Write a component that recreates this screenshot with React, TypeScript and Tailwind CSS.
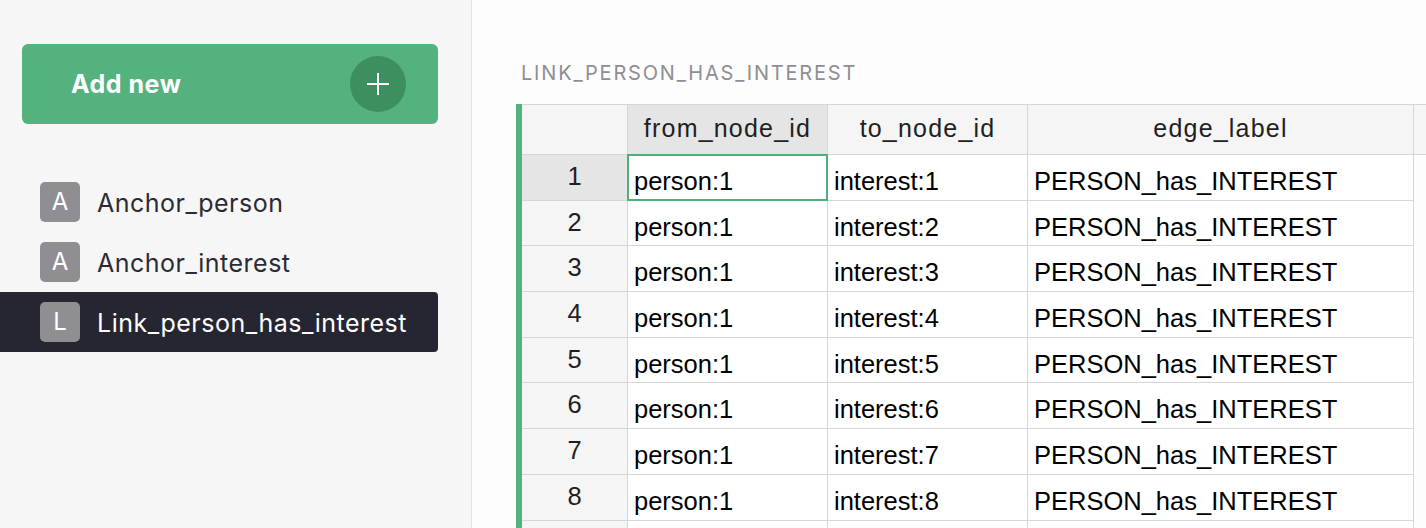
import React from "react";

const items = [
  { letter: "A", name: "Anchor_person", active: false },
  { letter: "A", name: "Anchor_interest", active: false },
  { letter: "L", name: "Link_person_has_interest", active: true },
];

const rows = [1, 2, 3, 4, 5, 6, 7, 8, 9];

function PlusIcon() {
  return (
    <svg width="24" height="24" viewBox="0 0 24 24" fill="none">
      <path d="M12 1v22M1 12h22" stroke="white" strokeWidth="2" />
    </svg>
  );
}

export default function App() {
  return (
    <div className="flex w-[1426px] h-[528px] overflow-hidden">
      <aside className="w-[472px] shrink-0 bg-[#f6f6f6] border-r border-[#e4e4e4] pt-[44px] font-['Inter',sans-serif]">
        <div className="pl-[22px]">
          <button className="w-[416px] h-[80px] rounded-[6px] bg-[#53b27d] flex items-center justify-between pl-[49px] pr-[32px]">
            <span className="text-white text-[25px] font-bold tracking-[0.5px] pt-[2px]">Add new</span>
            <span className="w-[56px] h-[56px] rounded-full bg-[#3e8f5f] flex items-center justify-center">
              <PlusIcon />
            </span>
          </button>
        </div>
        <ul className="mt-[48px]">
          {items.map((it) => (
            <li
              key={it.name}
              className={`w-[438px] h-[60px] flex items-center pl-[40px] gap-[17px] rounded-r-[4px] ${
                it.active ? "bg-[#262632] text-white" : "text-[#2b2b35]"
              }`}
            >
              <span className="w-[40px] h-[40px] rounded-[5px] bg-[#8e8e93] text-white text-[24px] flex items-center justify-center">
                {it.letter}
              </span>
              <span className="text-[25px] tracking-[0.5px] pt-[3px]">{it.name}</span>
            </li>
          ))}
        </ul>
      </aside>
      <main className="flex-1 bg-[#fdfdfd] pl-[44px] pt-[59px] min-w-0">
        <div className="pl-[5px] h-[45px] text-[20px] tracking-[1.8px] text-[#8e8e93] font-['Inter',sans-serif] leading-[28px]">
          LINK_PERSON_HAS_INTEREST
        </div>
        <div className="border-l-[6px] border-[#53b27d] font-['Liberation_Sans',Arial,sans-serif] text-black">
          <div className="flex h-[51px] border-t border-b border-[#d6d6d6] bg-[#f5f5f5] text-[25px] text-[#1f1f1f] tracking-[1.2px]">
            <div className="w-[106px] shrink-0 border-r border-[#d6d6d6]" />
            <div className="w-[200px] shrink-0 border-r border-[#d6d6d6] bg-[#e5e5e5] flex items-center justify-center pb-[2px]">
              from_node_id
            </div>
            <div className="w-[200px] shrink-0 border-r border-[#d6d6d6] flex items-center justify-center pb-[2px]">
              to_node_id
            </div>
            <div className="w-[386px] shrink-0 border-r border-[#d6d6d6] flex items-center justify-center pb-[2px]">
              edge_label
            </div>
            <div className="flex-1" />
          </div>
          {rows.map((n) => (
            <div key={n} className="flex h-[45.7px] text-[25.5px] leading-[28px]">
              <div
                className={`w-[106px] shrink-0 border-r border-b border-[#d6d6d6] flex justify-center pt-[7px] text-[#1f1f1f] ${
                  n === 1 ? "bg-[#e5e5e5]" : "bg-[#f5f5f5]"
                }`}
              >
                {n}
              </div>
              <div className="relative w-[200px] shrink-0 border-r border-b border-[#d6d6d6] bg-white pl-[6px] pt-[12px]">
                person:1
                {n === 1 && (
                  <div className="absolute -left-px -top-px -right-px -bottom-px border-2 border-[#4fae79]" />
                )}
              </div>
              <div className="w-[200px] shrink-0 border-r border-b border-[#d6d6d6] bg-white pl-[6px] pt-[12px]">
                interest:{n}
              </div>
              <div className="w-[386px] shrink-0 border-r border-b border-[#d6d6d6] bg-white pl-[6px] pt-[12px]">
                PERSON_has_INTEREST
              </div>
            </div>
          ))}
        </div>
      </main>
    </div>
  );
}
